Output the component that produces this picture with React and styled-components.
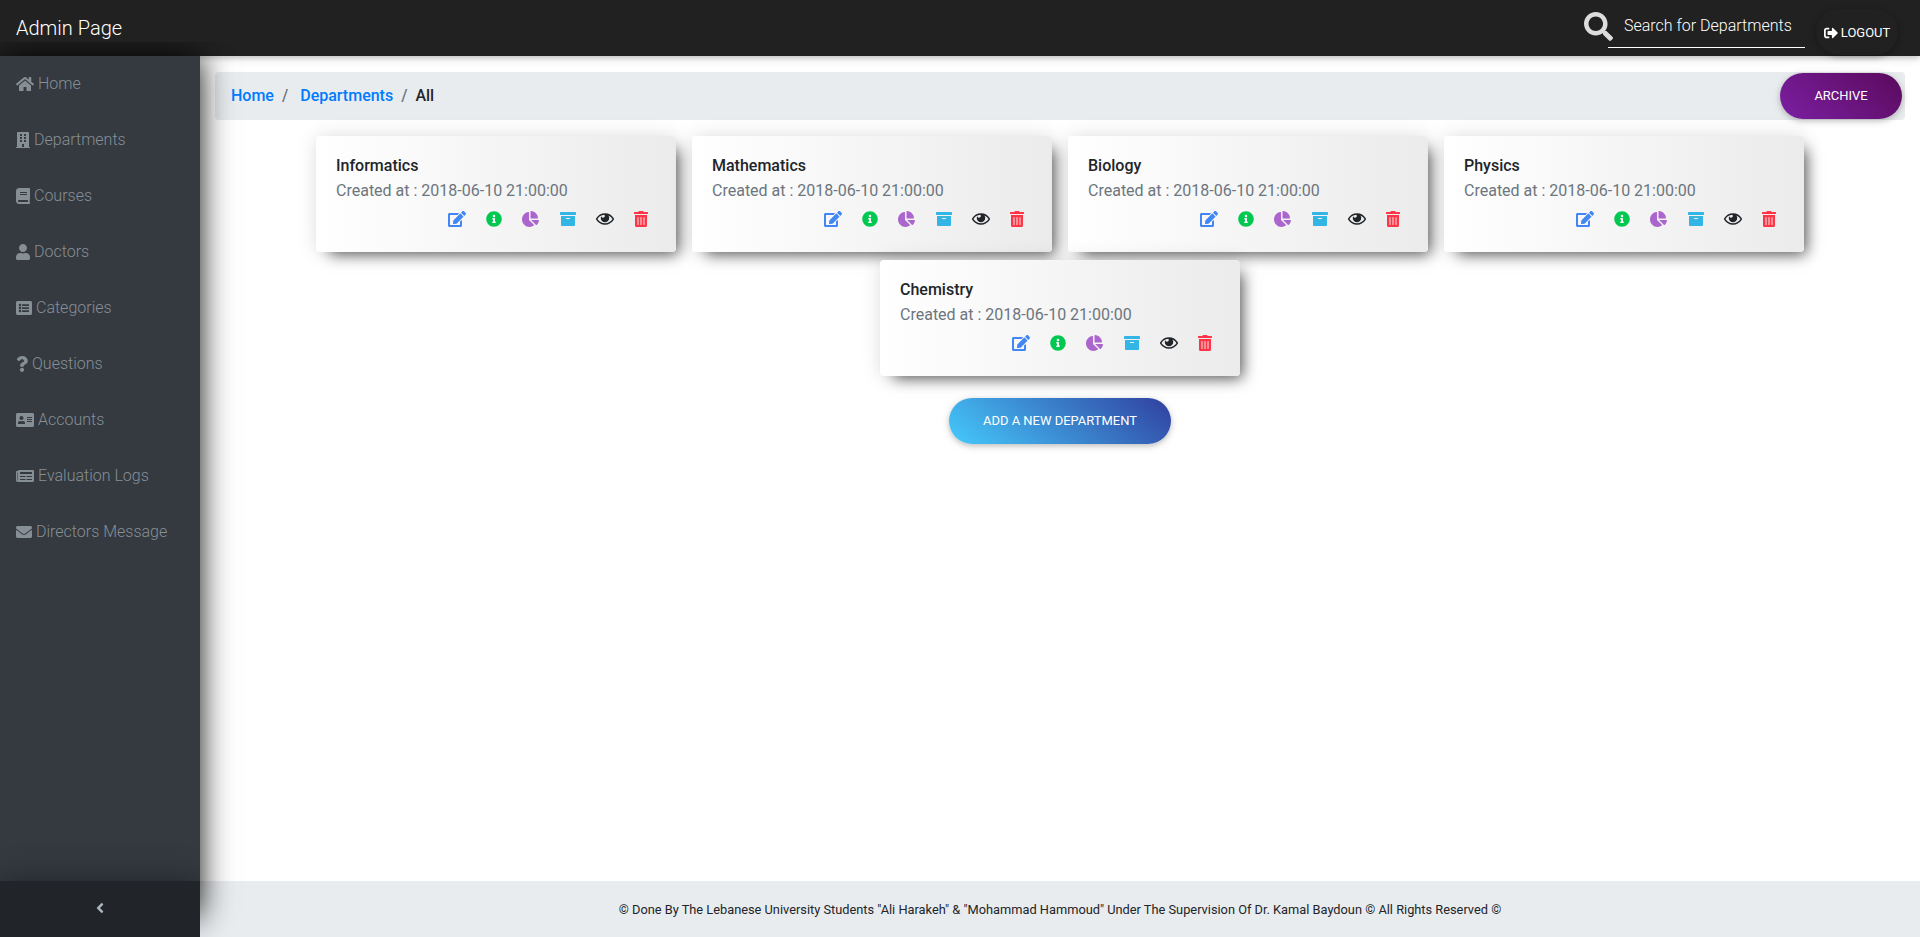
import React from "react";
import styled, { createGlobalStyle } from "styled-components";
import {
  FaHome, FaBuilding, FaBook, FaUser, FaListAlt, FaQuestion, FaAddressCard,
  FaNewspaper, FaEnvelope, FaAngleLeft, FaSearch, FaSignOutAlt, FaEdit,
  FaInfoCircle, FaChartPie, FaArchive, FaTrashAlt,
} from "react-icons/fa";

const GlobalStyle = createGlobalStyle`
  * { box-sizing: border-box; }
  body {
    margin: 0;
    background: #fff;
    color: #212529;
    font: 400 16px/24px Roboto, "Liberation Sans", sans-serif;
  }
  a { color: inherit; text-decoration: none; }
`;

const Page = styled.div`
  height: 100vh;
  display: grid;
  grid-template: 56px 1fr 56px / 200px 1fr;
  overflow: hidden;
`;

const Header = styled.header`
  grid-column: 1 / -1;
  position: relative;
  z-index: 2;
  display: flex;
  align-items: flex-start;
  padding-left: 16px;
  background: #212121;
  color: #fff;
  box-shadow: 0 2px 5px 0 rgba(0, 0, 0, 0.16), 0 2px 10px 0 rgba(0, 0, 0, 0.12);
`;

const Brand = styled.a`
  flex: 1;
  font-size: 20px;
  font-weight: 300;
  line-height: 56px;
`;

const SearchIcon = styled(FaSearch)`
  flex: none;
  margin-top: 12px;
  margin-right: -5px;
  font-size: 29px;
  color: #ddd;
`;

const SearchInput = styled.input`
  width: 197px;
  height: 38px;
  margin-top: 10px;
  padding: 0 0 7px 16px;
  border: 0;
  border-bottom: 1px solid #fff;
  background: transparent;
  color: #fff;
  font: 300 16px Roboto, sans-serif;
  &::placeholder { color: #fff; opacity: 1; }
`;

const PillButton = styled.button`
  display: inline-flex;
  align-items: center;
  justify-content: center;
  gap: 4px;
  width: ${(p) => p.$width}px;
  height: 46px;
  padding: 0 0 1px;
  border: 0;
  border-radius: 160px;
  background: ${(p) => p.$fill};
  color: #fff;
  font: 400 12.96px/19px Roboto, sans-serif;
  text-transform: uppercase;
  white-space: nowrap;
  box-shadow: 0 2px 5px 0 rgba(0, 0, 0, 0.16), 0 2px 10px 0 rgba(0, 0, 0, 0.12);
`;

const Logout = styled(PillButton)`
  gap: 3px;
  margin: 9px 22px 0 11px;
  padding: 1px 0 0;
  svg { width: 14px; height: 14px; }
`;

const Sidebar = styled.aside`
  grid-row: 2 / -1;
  position: relative;
  z-index: 3;
  display: flex;
  flex-direction: column;
  justify-content: space-between;
  background: #343a40;
  clip-path: inset(-14px -50px 0 0);
  &::before {
    content: "";
    position: absolute;
    inset: 0 0 20px;
    z-index: -1;
    box-shadow: 0 0 30px rgba(0, 0, 0, 0.95);
  }
`;

const NavItem = styled.a`
  display: flex;
  align-items: center;
  gap: 4px;
  height: 56px;
  padding-left: 16px;
  color: #868e96;
  font-weight: 300;
`;

const Glyph = styled.span`
  display: flex;
  svg { width: ${(p) => p.$width}px; height: 16px; }
`;

const Collapse = styled.button`
  display: flex;
  align-items: center;
  justify-content: center;
  height: 56px;
  padding: 0 0 2px;
  border: 0;
  background: #212529;
  color: #adb5bd;
  font-size: 16px;
  box-shadow: 0 0 30px #212529;
  clip-path: inset(-40px 0 0);
`;

const Main = styled.main`
  min-width: 0;
  padding: 16px 15px 0;
`;

const Breadcrumb = styled.nav`
  display: flex;
  align-items: center;
  height: 48px;
  padding: 0 3px 0 16px;
  border-radius: 4px;
  background: #e9ecef;
  font-weight: 500;
`;

const Crumb = styled.a`
  color: #007bff;
`;

const Divider = styled.span`
  padding: 0 ${(p) => p.$after}px 0 8px;
  color: #6c757d;
`;

const Current = styled.span`
  flex: 1;
`;

const Cards = styled.section`
  display: flex;
  flex-wrap: wrap;
  justify-content: center;
  gap: 8px 16px;
  padding: 16px 60px 0;
`;

const Card = styled.article`
  width: 360px;
  height: 116px;
  padding: 18px 28px 0 20px;
  border-radius: 4px;
  background: linear-gradient(to right, #fff, #ebebeb);
  box-shadow: 8px 8px 14px -6px rgba(0, 0, 0, 0.65), 0 0 20px rgba(0, 0, 0, 0.12);
`;

const CardTitle = styled.h4`
  margin: 0 0 1px;
  font-size: 16px;
  font-weight: 500;
  line-height: 24px;
`;

const CardDate = styled.p`
  margin: 0;
  color: #6c757d;
`;

const Actions = styled.div`
  display: flex;
  justify-content: flex-end;
  gap: 20.2px;
  margin-top: 8px;
`;

const Action = styled.a`
  color: ${(p) => p.$color};
`;

const AddRow = styled.div`
  display: flex;
  justify-content: center;
  padding-top: 22px;
`;

const Footer = styled.footer`
  display: flex;
  align-items: center;
  justify-content: center;
  padding-top: 2px;
  background: #e9ecef;
  font-size: 12.8px;
`;

const Eye = () => (
  <svg viewBox="0 0 576 512" fill="currentColor">
    <path d="M569.354 231.631C512.97 135.949 407.81 72 288 72 168.14 72 63.004 135.994 6.646 231.631a47.999 47.999 0 0 0 0 48.739C63.031 376.051 168.19 440 288 440c119.86 0 224.996-63.994 281.354-159.631a47.997 47.997 0 0 0 0-48.738zM288 392c-102.556 0-192.091-54.701-240-136 44.157-74.933 123.677-127.27 216.162-135.007C273.958 131.078 280 144.83 280 160c0 30.928-25.072 56-56 56s-56-25.072-56-56l.001-.042C157.794 179.043 152 200.844 152 224c0 75.111 60.889 136 136 136s136-60.889 136-136c0-31.031-10.4-59.629-27.895-82.515C451.704 164.638 498.009 205.106 528 256c-47.908 81.299-137.444 136-240 136z" />
  </svg>
);

const nav = [
  [FaHome, 18, "Home"], [FaBuilding, 14, "Departments"], [FaBook, 14, "Courses"],
  [FaUser, 14, "Doctors"], [FaListAlt, 16, "Categories"], [FaQuestion, 12, "Questions"],
  [FaAddressCard, 18, "Accounts"], [FaNewspaper, 18, "Evaluation Logs"],
  [FaEnvelope, 16, "Directors Message"],
];

const actions = [
  [FaEdit, 18, "#4285f4"], [FaInfoCircle, 16, "#00c851"], [FaChartPie, 17, "#aa66cc"],
  [FaArchive, 16, "#33b5e5"], [Eye, 18, "#212529"], [FaTrashAlt, 14, "#ff3547"],
];

const departments = ["Informatics", "Mathematics", "Biology", "Physics", "Chemistry"];

export default function App() {
  return (
    <Page>
      <GlobalStyle />
      <Header>
        <Brand>Admin Page</Brand>
        <SearchIcon />
        <SearchInput placeholder="Search for Departments" />
        <Logout $width={82} $fill="#212121"><FaSignOutAlt />Logout</Logout>
      </Header>
      <Sidebar>
        <nav>
          {nav.map(([Icon, width, label]) => (
            <NavItem key={label}><Glyph $width={width}><Icon /></Glyph>{label}</NavItem>
          ))}
        </nav>
        <Collapse><FaAngleLeft /></Collapse>
      </Sidebar>
      <Main>
        <Breadcrumb>
          <Crumb>Home</Crumb>
          <Divider $after={12}>/</Divider>
          <Crumb>Departments</Crumb>
          <Divider $after={8}>/</Divider>
          <Current>All</Current>
          <PillButton $width={122} $fill="linear-gradient(40deg, #7b1fa2, #5a0a5c)">Archive</PillButton>
        </Breadcrumb>
        <Cards>
          {departments.map((name) => (
            <Card key={name}>
              <CardTitle>{name}</CardTitle>
              <CardDate>Created at : 2018-06-10 21:00:00</CardDate>
              <Actions>
                {actions.map(([Icon, width, color]) => (
                  <Action key={color} $color={color}><Glyph $width={width}><Icon /></Glyph></Action>
                ))}
              </Actions>
            </Card>
          ))}
        </Cards>
        <AddRow>
          <PillButton $width={222} $fill="linear-gradient(40deg, #45cafc, #303f9f)">Add a new department</PillButton>
        </AddRow>
      </Main>
      <Footer>
        © Done By The Lebanese University Students "Ali Harakeh" &amp; "Mohammad Hammoud" Under The Supervision Of Dr. Kamal Baydoun © All Rights Reserved ©
      </Footer>
    </Page>
  );
}
